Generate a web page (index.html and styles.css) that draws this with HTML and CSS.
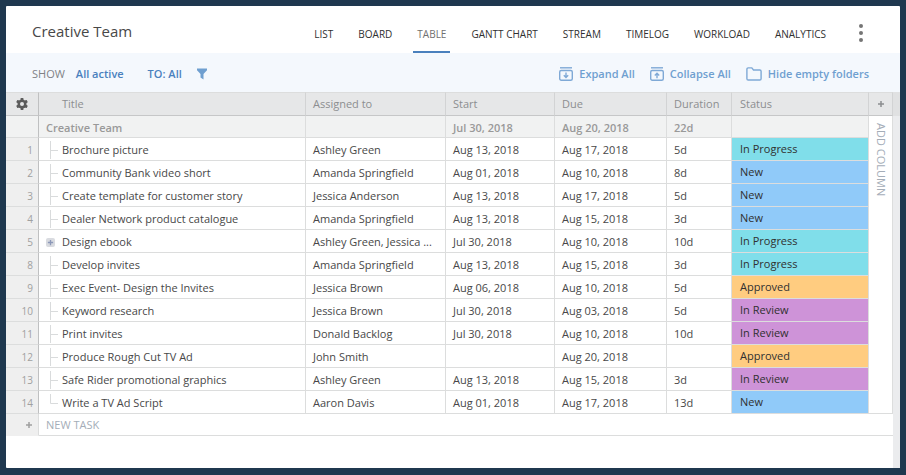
FILE: index.html
```html
<!DOCTYPE html>
<html lang="en">
<head>
<meta charset="utf-8">
<meta name="viewport" content="width=device-width, initial-scale=1">
<title>Creative Team</title>
<link rel="stylesheet" href="styles.css">
</head>
<body>
<svg class="sprite" aria-hidden="true">
  <symbol id="branch" viewBox="0 0 16 22"><path d="M4.5 2v18M5 11.5h7" fill="none" stroke="#d9dbdc"/></symbol>
  <symbol id="branch-end" viewBox="0 0 16 22"><path d="M4.5 2v9.500h7.500" fill="none" stroke="#d9dbdc"/></symbol>
  <symbol id="plus" viewBox="0 0 8 8"><path d="M4 1v6M1 4h6" fill="none" stroke="currentColor" stroke-width="1.500"/></symbol>
</svg>
<main class="panel">
  <header class="header">
    <h1 class="heading">Creative Team</h1>
    <nav class="tabs">
      <a class="tab" href="#list">LIST</a>
      <a class="tab" href="#board">BOARD</a>
      <a class="tab tab-active" href="#table" aria-current="page">TABLE</a>
      <a class="tab" href="#gantt">GANTT CHART</a>
      <a class="tab" href="#stream">STREAM</a>
      <a class="tab" href="#timelog">TIMELOG</a>
      <a class="tab" href="#workload">WORKLOAD</a>
      <a class="tab" href="#analytics">ANALYTICS</a>
    </nav>
    <button class="more" type="button" aria-label="More">
      <svg width="6" height="20" viewBox="0 0 6 20" fill="#757575"><circle cx="3" cy="3" r="2"/><circle cx="3" cy="10" r="2"/><circle cx="3" cy="17" r="2"/></svg>
    </button>
  </header>

  <div class="toolbar">
    <div class="filters">
      <span class="show">SHOW</span>
      <button class="filter" type="button">All active</button>
      <button class="filter" type="button">TO: All</button>
      <button class="filter" type="button" aria-label="Filter">
        <svg width="10" height="12" viewBox="0 0 10 12"><path d="M0 .5h10v1.800L6.500 6v5.500L3.500 9.500V6L0 2.300z" fill="#6f9fd0"/></svg>
      </button>
    </div>
    <div class="actions">
      <button class="action" type="button">
        <svg width="14" height="14" viewBox="0 0 14 14" fill="none" stroke="#7fa9d6" stroke-width="1.400"><path d="M1 .8h12"/><rect x=".7" y="3.500" width="12.600" height="9.700" rx="1.500"/><path d="M7 5.500v5M4.800 8.300L7 10.500l2.200-2.200"/></svg>
        Expand All
      </button>
      <button class="action" type="button">
        <svg width="14" height="14" viewBox="0 0 14 14" fill="none" stroke="#7fa9d6" stroke-width="1.400"><path d="M1 .8h12"/><rect x=".7" y="3.500" width="12.600" height="9.700" rx="1.500"/><path d="M7 11.200v-5M4.800 8.400L7 6.200l2.200 2.200"/></svg>
        Collapse All
      </button>
      <button class="action" type="button">
        <svg width="16" height="14" viewBox="0 0 16 14" fill="none" stroke="#7fa9d6" stroke-width="1.400"><path d="M2.200.9h3.600L7.500 3h6.300q1.300 0 1.300 1.300v7.400q0 1.300-1.300 1.300H2.200Q.9 13 .9 11.700V2.200Q.9.9 2.200.9z"/></svg>
        Hide empty folders
      </button>
    </div>
  </div>

  <div class="sheet">
    <table class="grid">
      <colgroup>
        <col class="c-num"><col><col class="c-who"><col class="c-start"><col class="c-due"><col class="c-dur"><col class="c-status"><col class="c-add">
      </colgroup>
      <thead>
        <tr>
          <th class="num gear"><button class="icon" type="button" aria-label="Settings"><svg width="12" height="12" viewBox="0 0 12 12"><g fill="#5c5c5c"><rect x="4.600" y="0" width="2.800" height="12" rx=".6"/><rect x="4.600" y="0" width="2.800" height="12" rx=".6" transform="rotate(60 6 6)"/><rect x="4.600" y="0" width="2.800" height="12" rx=".6" transform="rotate(120 6 6)"/><circle cx="6" cy="6" r="4.500"/></g><circle cx="6" cy="6" r="2" fill="#e6e7e8"/></svg></button></th>
          <th class="title-head">Title</th><th>Assigned to</th><th>Start</th><th>Due</th><th>Duration</th><th class="status-head">Status</th>
          <th class="add-head"><button class="icon" type="button" aria-label="Add column"><svg width="8" height="8"><use href="#plus"/></svg></button></th>
        </tr>
      </thead>
      <tbody>
        <tr class="group"><td class="num"></td><td>Creative Team</td><td></td><td>Jul 30, 2018</td><td>Aug 20, 2018</td><td>22d</td><td></td><td class="add" rowspan="13"><button class="add-label" type="button">ADD COLUMN</button></td></tr>
        <tr><td class="num">1</td><td><div class="task"><svg><use href="#branch"/></svg>Brochure picture</div></td><td>Ashley Green</td><td>Aug 13, 2018</td><td>Aug 17, 2018</td><td>5d</td><td class="status progress">In Progress</td></tr>
        <tr><td class="num">2</td><td><div class="task"><svg><use href="#branch"/></svg>Community Bank video short</div></td><td>Amanda Springfield</td><td>Aug 01, 2018</td><td>Aug 10, 2018</td><td>8d</td><td class="status new">New</td></tr>
        <tr><td class="num">3</td><td><div class="task"><svg><use href="#branch"/></svg>Create template for customer story</div></td><td>Jessica Anderson</td><td>Aug 13, 2018</td><td>Aug 17, 2018</td><td>5d</td><td class="status new">New</td></tr>
        <tr><td class="num">4</td><td><div class="task"><svg><use href="#branch"/></svg>Dealer Network product catalogue</div></td><td>Amanda Springfield</td><td>Aug 13, 2018</td><td>Aug 15, 2018</td><td>3d</td><td class="status new">New</td></tr>
        <tr><td class="num">5</td><td><div class="task"><button class="expand" type="button" aria-label="Expand Design ebook"><svg width="7" height="7"><use href="#plus"/></svg></button>Design ebook</div></td><td>Ashley Green, Jessica ...</td><td>Jul 30, 2018</td><td>Aug 10, 2018</td><td>10d</td><td class="status progress">In Progress</td></tr>
        <tr><td class="num">8</td><td><div class="task"><svg><use href="#branch"/></svg>Develop invites</div></td><td>Amanda Springfield</td><td>Aug 13, 2018</td><td>Aug 15, 2018</td><td>3d</td><td class="status progress">In Progress</td></tr>
        <tr><td class="num">9</td><td><div class="task"><svg><use href="#branch"/></svg>Exec Event- Design the Invites</div></td><td>Jessica Brown</td><td>Aug 06, 2018</td><td>Aug 10, 2018</td><td>5d</td><td class="status approved">Approved</td></tr>
        <tr><td class="num">10</td><td><div class="task"><svg><use href="#branch"/></svg>Keyword research</div></td><td>Jessica Brown</td><td>Jul 30, 2018</td><td>Aug 03, 2018</td><td>5d</td><td class="status review">In Review</td></tr>
        <tr><td class="num">11</td><td><div class="task"><svg><use href="#branch"/></svg>Print invites</div></td><td>Donald Backlog</td><td>Jul 30, 2018</td><td>Aug 10, 2018</td><td>10d</td><td class="status review">In Review</td></tr>
        <tr><td class="num">12</td><td><div class="task"><svg><use href="#branch"/></svg>Produce Rough Cut TV Ad</div></td><td>John Smith</td><td></td><td>Aug 20, 2018</td><td></td><td class="status approved">Approved</td></tr>
        <tr><td class="num">13</td><td><div class="task"><svg><use href="#branch"/></svg>Safe Rider promotional graphics</div></td><td>Ashley Green</td><td>Aug 13, 2018</td><td>Aug 15, 2018</td><td>3d</td><td class="status review">In Review</td></tr>
        <tr><td class="num">14</td><td><div class="task"><svg><use href="#branch-end"/></svg>Write a TV Ad Script</div></td><td>Aaron Davis</td><td>Aug 01, 2018</td><td>Aug 17, 2018</td><td>13d</td><td class="status new">New</td></tr>
      </tbody>
      <tfoot>
        <tr><td class="num"><svg width="8" height="8"><use href="#plus"/></svg></td><td colspan="7"><button class="new-task" type="button">NEW TASK</button></td></tr>
      </tfoot>
    </table>
    <div class="gutter"></div>
  </div>
</main>
</body>
</html>
```
FILE: styles.css
```css
* { box-sizing: border-box; }

body {
  margin: 0;
  min-height: 100vh;
  display: flex;
  padding: 6px 6px 7px;
  background: #1f384f;
  font-family: "Open Sans", "Liberation Sans", sans-serif;
  font-size: 12px;
  color: #484848;
}

button {
  margin: 0;
  padding: 0;
  border: 0;
  background: none;
  font: inherit;
  color: inherit;
  cursor: pointer;
}

svg { display: block; flex: none; }
.sprite { position: absolute; width: 0; height: 0; }

.panel {
  flex: 1;
  min-width: 0;
  display: flex;
  flex-direction: column;
  background: #fff;
  border-radius: 1px;
}

.header {
  display: flex;
  align-items: center;
  height: 47px;
  padding: 0 36px 0 26px;
}

.heading {
  flex: 1;
  margin: 0;
  padding-top: 2px;
  font-size: 15px;
  font-weight: 400;
  line-height: 22px;
  white-space: nowrap;
}

.tabs { display: flex; gap: 17px; align-self: stretch; }

.tab {
  display: flex;
  align-items: center;
  padding: 10px 4px 0;
  border-bottom: 2px solid transparent;
  font-size: 10px;
  font-weight: 500;
  white-space: nowrap;
  color: #303030;
  text-decoration: none;
}

.tab-active { color: #707070; border-color: #4a80bd; }
.more { margin-left: 28px; padding-top: 6px; }

.toolbar {
  display: flex;
  align-items: center;
  justify-content: space-between;
  height: 39px;
  padding: 3px 31px 0 26px;
  background: #f4f8fd;
  font-size: 11px;
  line-height: 16px;
}

.filters, .actions { display: flex; align-items: center; }
.show { margin-right: 11px; color: #808285; }
.filter { font-weight: 600; color: #4a80bd; }
.filter + .filter { margin-left: 24px; }
.filter:last-child { margin-left: 15px; }
.actions { gap: 15px; }

.action {
  display: flex;
  align-items: center;
  gap: 6px;
  font-weight: 600;
  white-space: nowrap;
  color: #6f9fd0;
}

.sheet { flex: 1; display: flex; align-items: stretch; }

.gutter {
  flex: none;
  width: 7px;
  background: linear-gradient(#e0e1e2 24px, #ebecee 24px);
}

.grid {
  flex: 1;
  width: 100%;
  min-width: 0;
  align-self: flex-start;
  table-layout: fixed;
  border-collapse: separate;
  border-spacing: 0;
}

.c-num { width: 33px; }
.c-who { width: 140px; }
.c-start { width: 109px; }
.c-due { width: 112px; }
.c-dur { width: 65px; }
.c-status { width: 137px; }
.c-add { width: 24px; }

th, td {
  height: 23px;
  padding: 2px 7px 0;
  border-right: 1px solid #dcdddd;
  border-bottom: 1px solid #dcdddd;
  font-size: 11px;
  line-height: 16px;
  text-align: left;
  white-space: nowrap;
}

th {
  height: 24px;
  padding-top: 0;
  border-top: 1px solid #dcdddd;
  border-right-color: #d2d3d4;
  border-bottom-color: #c6c7c8;
  background: #e6e7e8;
  font-weight: 400;
  color: #8c8e90;
}

.title-head { padding-left: 23px; }
.status-head { padding-left: 8px; }

.num {
  padding-right: 5px;
  border-right-color: #bfc0c1;
  background: #efefef;
  font-size: 10px;
  text-align: right;
  color: #a0a0a0;
}

.gear { padding: 0; background: #e6e7e8; }
.icon { display: flex; width: 100%; justify-content: center; }
.add-head { padding: 0; }

.group td {
  height: 22px;
  background: #f1f2f2;
  font-weight: 600;
  color: #999;
}

.task { display: flex; align-items: center; height: 16px; }
.task > svg { width: 16px; height: 22px; margin: -4px 0 -3px; }

.expand {
  display: flex;
  align-items: center;
  justify-content: center;
  width: 9px;
  height: 9px;
  margin-right: 7px;
  border-radius: 2px;
  background: #d9dbe0;
  color: #8c98b8;
}

.status { padding: 0 8px; color: #303030; }
.progress { background: #80deea; }
.new { background: #90caf9; }
.approved { background: #ffcc80; }
.review { background: #ce93d8; }

.group .add {
  padding: 7px 0 0;
  background: #fff;
  vertical-align: top;
  font-weight: 400;
  color: #a4adb8;
}

.add-label { display: block; margin: 0 auto; writing-mode: vertical-rl; line-height: 16px; }

tfoot td { height: 22px; padding-top: 0; border-right: 0; }
tfoot .num { border-right: 1px solid #dcdddd; border-bottom-color: #efefef; }
tfoot .num svg { margin-left: auto; }
.new-task { color: #a4adb8; }
```
